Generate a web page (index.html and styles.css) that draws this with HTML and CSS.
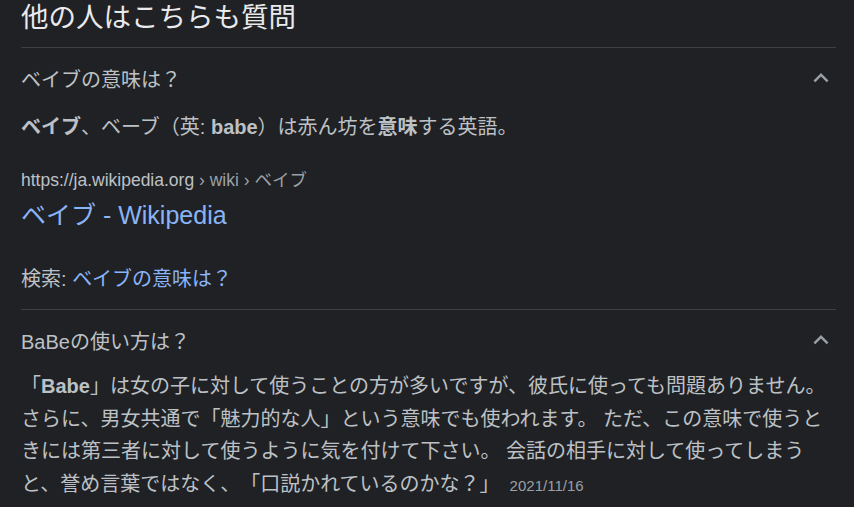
FILE: index.html
```html
<!DOCTYPE html>
<html lang="ja">
<head>
    <meta charset="UTF-8">
    <meta name="viewport" content="width=device-width, initial-scale=1.0">
    <title>他の人はこちらも質問</title>
    <link rel="stylesheet" href="styles.css">
</head>
<body>
    <div class="paa">
        <h2 class="paa-title">他の人はこちらも質問</h2>

        <div class="item">
            <div class="q">
                <span>ベイブの意味は？</span>
                <svg class="chev" viewBox="0 0 24 24" width="30" height="30"><path d="M12 8l-6 6 1.41 1.41L12 10.83l4.59 4.58L18 14z"/></svg>
            </div>
            <div class="a">
                <p class="snippet"><b>ベイブ</b>、ベーブ（英: <b>babe</b>）は赤ん坊を<b>意味</b>する英語。</p>
                <div class="cite">https://ja.wikipedia.org<span class="crumb"> › wiki › ベイブ</span></div>
                <a class="title-link" href="#">ベイブ - Wikipedia</a>
                <div class="search">検索: <a href="#">ベイブの意味は？</a></div>
            </div>
        </div>

        <div class="item last">
            <div class="q">
                <span>BaBeの使い方は？</span>
                <svg class="chev" viewBox="0 0 24 24" width="30" height="30"><path d="M12 8l-6 6 1.41 1.41L12 10.83l4.59 4.58L18 14z"/></svg>
            </div>
            <div class="a">
                <p class="long">「<b>Babe</b>」は女の子に対して使うことの方が多いですが、彼氏に使っても問題ありません。 さらに、男女共通で「魅力的な人」という意味でも使われます。 ただ、この意味で使うときには第三者に対して使うように気を付けて下さい。 会話の相手に対して使ってしまうと、誉め言葉ではなく、「口説かれているのかな？」<span class="date">2021/11/16</span></p>
            </div>
        </div>
    </div>
</body>
</html>
```

FILE: styles.css
```css
html, body{
    margin: 0;
    padding: 0;
    background: #202124;
}
body{
    font-family: "Liberation Sans", "Noto Sans CJK JP", sans-serif;
    color: #bdc1c6;
    overflow: hidden;
    text-spacing-trim: space-all;
}
a{
    color: #8ab4f8;
    text-decoration: none;
}
.paa{
    width: 815px;
    margin-left: 21px;
}
.paa-title{
    margin: 0;
    font-size: 27.5px;
    font-weight: normal;
    line-height: 36px;
    color: #e8eaed;
    padding-bottom: 11px;
    border-bottom: 1px solid #3c4043;
}
.item{
    border-bottom: 1px solid #3c4043;
}
.item.last{
    border-bottom: none;
}
.q{
    height: 60px;
    display: flex;
    align-items: center;
    justify-content: space-between;
    font-size: 20px;
    color: #bdc1c6;
}
.chev{
    fill: #9aa0a6;
    display: block;
}
.a{
    padding-bottom: 15px;
}
.snippet{
    margin: 0;
    padding-top: 3px;
    font-size: 20px;
    line-height: 32px;
}
.cite{
    margin-top: 26px;
    font-size: 17.5px;
    line-height: 22px;
    color: #bdc1c6;
}
.crumb{
    color: #9aa0a6;
}
.title-link{
    display: block;
    margin-top: 9px;
    font-size: 25px;
    line-height: 30px;
}
.search{
    margin-top: 34px;
    font-size: 20px;
    line-height: 30px;
}
.long{
    margin: 0;
    font-size: 20px;
    line-height: 32.5px;
}
.date{
    font-size: 15px;
    color: #9aa0a6;
    margin-left: 10px;
}
```
